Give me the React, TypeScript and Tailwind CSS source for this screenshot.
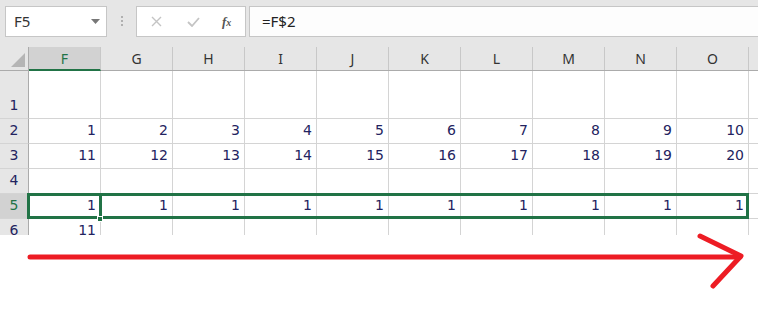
import React from 'react';

const cols = ['F', 'G', 'H', 'I', 'J', 'K', 'L', 'M', 'N', 'O'];

const rows: { n: number; h: string; vals: (number | null)[] }[] = [
  { n: 1, h: 'h-[48px]', vals: Array(10).fill(null) },
  { n: 2, h: 'h-[25px]', vals: [1, 2, 3, 4, 5, 6, 7, 8, 9, 10] },
  { n: 3, h: 'h-[25px]', vals: [11, 12, 13, 14, 15, 16, 17, 18, 19, 20] },
  { n: 4, h: 'h-[25px]', vals: Array(10).fill(null) },
  { n: 5, h: 'h-[25px]', vals: Array(10).fill(1) },
  { n: 6, h: 'h-[25px]', vals: [11, null, null, null, null, null, null, null, null, null] },
];

export default function App() {
  return (
    <div className="relative w-[758px] h-[311px] overflow-hidden bg-white font-['DejaVu_Sans',sans-serif]">
      {/* Formula bar */}
      <div className="h-[47px] bg-[#e6e6e6] flex items-start pt-[6px]">
        <div className="ml-[5px] w-[102px] h-[31px] bg-white border border-[#c6c6c6] flex items-center justify-between pl-[8px] pr-[6px]">
          <span className="text-[15px] text-[#333] font-['Noto_Sans',sans-serif]">F5</span>
          <svg width="9" height="5" viewBox="0 0 9 5"><path d="M0 0h9L4.5 5z" fill="#777" /></svg>
        </div>
        <div className="ml-[14px] mt-[10px] flex flex-col gap-[2px]">
          <div className="w-[2px] h-[2px] bg-[#b0b0b0]" />
          <div className="w-[2px] h-[2px] bg-[#b0b0b0]" />
          <div className="w-[2px] h-[2px] bg-[#b0b0b0]" />
        </div>
        <div className="ml-[13px] w-[110px] h-[31px] bg-white border border-[#c6c6c6] flex items-center">
          <svg className="ml-[14px]" width="11" height="11" viewBox="0 0 11 11">
            <path d="M1 1l9 9M10 1l-9 9" stroke="#c4c4c4" strokeWidth="1.4" />
          </svg>
          <svg className="ml-[25px]" width="13" height="10" viewBox="0 0 13 10">
            <path d="M1 5l4 4 7-8" stroke="#c4c4c4" strokeWidth="1.8" fill="none" />
          </svg>
          <span className="ml-[22px] text-[13px] italic font-bold text-[#555] font-['Liberation_Serif',serif]">
            f<span className="text-[10px]">x</span>
          </span>
        </div>
        <div className="ml-[3px] flex-1 h-[31px] bg-[#fdfdfd] border border-[#c6c6c6] border-r-0 flex items-center pl-[12px]">
          <span className="text-[15px] text-[#222] font-['Noto_Sans',sans-serif]">=F$2</span>
        </div>
      </div>

      {/* Sheet */}
      <div className="h-[188px] overflow-hidden">
        {/* Column headers */}
        <div className="flex h-[24px] bg-[#e6e6e6] border-b border-[#ababab]">
          <div className="w-[29px] shrink-0 border-r border-[#ababab] relative">
            <svg className="absolute right-[3px] bottom-[3px]" width="14" height="14" viewBox="0 0 14 14">
              <path d="M14 0v14H0z" fill="#b5b5b5" />
            </svg>
          </div>
          {cols.map((c, i) => (
            <div
              key={c}
              className={`w-[72px] shrink-0 border-r border-[#c8c8c8] flex items-center justify-center text-[14px] font-['Noto_Sans',sans-serif] ${
                i === 0 ? 'bg-[#d2d2d2] text-[#217346] border-b-2 border-b-[#217346] -mb-px' : 'text-[#333]'
              }`}
            >
              {c}
            </div>
          ))}
          <div className="flex-1" />
        </div>

        {/* Rows */}
        {rows.map((r) => (
          <div key={r.n} className={`flex ${r.h}`}>
            <div
              className={`w-[29px] shrink-0 border-r border-b border-r-[#ababab] border-b-[#d4d4d4] flex items-end justify-center pb-[2px] text-[14px] ${
                r.n === 5 ? 'bg-[#d2d2d2] text-[#217346]' : 'bg-[#e6e6e6] text-[#232360]'
              }`}
            >
              {r.n}
            </div>
            {r.vals.map((v, i) => (
              <div
                key={i}
                className="w-[72px] shrink-0 border-r border-b border-[#d4d4d4] flex items-end justify-end pr-[4px] pb-[2px] text-[14px] text-[#232360]"
              >
                {v}
              </div>
            ))}
            <div className="flex-1 border-b border-[#d4d4d4]" />
          </div>
        ))}
      </div>

      {/* Selection overlay */}
      <div className="absolute left-[27px] top-[193px] w-[722px] h-[26px] border-[3px] border-[#217346] pointer-events-none" />
      <div className="absolute left-[99px] top-[194px] w-[3px] h-[24px] bg-[#217346] pointer-events-none" />
      <div className="absolute left-[97px] top-[216px] w-[6px] h-[6px] bg-[#217346] border border-white pointer-events-none" />

      {/* Red arrow annotation */}
      <svg className="absolute left-0 top-0 pointer-events-none" width="758" height="311" viewBox="0 0 758 311">
        <path d="M30 257H740" stroke="#ed1c24" strokeWidth="5" strokeLinecap="round" />
        <path d="M700 236L741 256L713 286" stroke="#ed1c24" strokeWidth="5" strokeLinecap="round" strokeLinejoin="round" fill="none" />
      </svg>
    </div>
  );
}
